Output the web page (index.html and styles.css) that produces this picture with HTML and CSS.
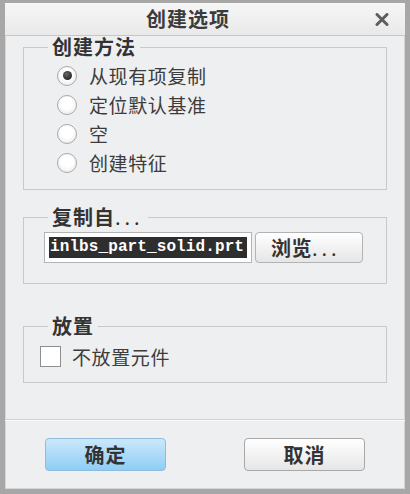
FILE: index.html
```html
<!DOCTYPE html>
<html lang="zh-CN">
<head>
    <meta charset="UTF-8">
    <title>创建选项</title>
    <link rel="stylesheet" href="styles.css">
</head>
<body>
    <div class="dialog">
        <div class="titlebar">
            <span class="title">创建选项</span>
            <svg class="close" width="14" height="13" viewBox="0 0 14 13">
                <path d="M2 1.5 L12 11.5 M12 1.5 L2 11.5" stroke="#5e5e5e" stroke-width="3" stroke-linecap="round"/>
            </svg>
        </div>
        <div class="content">
            <fieldset class="group group-method">
                <legend>创建方法</legend>
                <div class="group-body">
                    <label class="option"><span class="radio checked"></span>从现有项复制</label>
                    <label class="option"><span class="radio"></span>定位默认基准</label>
                    <label class="option"><span class="radio"></span>空</label>
                    <label class="option"><span class="radio"></span>创建特征</label>
                </div>
            </fieldset>

            <fieldset class="group group-copy">
                <legend>复制自<span class="dots">...</span></legend>
                <div class="group-body file-row">
                    <div class="file-input"><span class="selected">inlbs_part_solid.prt</span></div>
                    <button type="button" class="btn browse">浏览<span class="dots">...</span></button>
                </div>
            </fieldset>

            <fieldset class="group group-place">
                <legend>放置</legend>
                <div class="group-body">
                    <label class="option check-option"><span class="checkbox"></span>不放置元件</label>
                </div>
            </fieldset>
        </div>
        <div class="footer">
            <button type="button" class="btn action ok">确定</button>
            <button type="button" class="btn action">取消</button>
        </div>
    </div>
</body>
</html>
```

FILE: styles.css
```css
body {
    margin: 0;
    padding: 0;
    background-color: #eeeff0;
    font-family: "Noto Sans CJK SC", "Noto Sans", sans-serif;
}

.dialog {
    width: 410px;
    height: 494px;
    box-sizing: border-box;
    border: 5px solid #a7a7a7;
    border-top-width: 3px;
    box-shadow: inset 0 0 0 1px #d6d6d6;
    background-color: #eeeff0;
    display: flex;
    flex-direction: column;
}

.titlebar {
    height: 33px;
    box-sizing: border-box;
    border-bottom: 1px solid #c6c6c6;
    background: linear-gradient(#f6f6f6, #e9e9e9);
    display: flex;
    align-items: center;
    padding-left: 141px;
    padding-right: 16px;
}

.title {
    flex: 1;
    font-size: 20px;
    font-weight: bold;
    letter-spacing: 1px;
    color: #3b3b3b;
    line-height: 24px;
}

.close {
    display: block;
}

.content {
    flex: 1;
    padding: 1px 18px 0 18px;
}

.group {
    margin: 0;
    padding: 0;
    min-width: 0;
    border: 1px solid #c9c9c9;
}

.group legend {
    margin-left: 24px;
    padding: 0 4px;
    font-size: 20px;
    font-weight: bold;
    line-height: 20px;
    letter-spacing: 1px;
    color: #333;
}

.dots {
    letter-spacing: 4px;
    font-weight: normal;
}

.group-method .group-body {
    padding: 4px 0 12px 33px;
}

.group-copy {
    margin-top: 17px;
}

.group-copy .group-body {
    padding: 5px 0 20px 20px;
}

.group-place {
    margin-top: 32px;
}

.group-place .group-body {
    padding: 5px 0 11px 16px;
}

.option {
    display: flex;
    align-items: center;
    height: 29px;
    gap: 12px;
    font-size: 19px;
    letter-spacing: 0.6px;
    color: #3c3c3c;
}

.check-option {
    height: 30px;
    gap: 11px;
}

.radio {
    width: 20px;
    height: 20px;
    box-sizing: border-box;
    border-radius: 50%;
    border: 1px solid #a9a9a9;
    background: radial-gradient(circle at 50% 40%, #ffffff 40%, #e4e4e4);
    display: flex;
    align-items: center;
    justify-content: center;
}

.radio.checked::after {
    content: "";
    width: 9px;
    height: 9px;
    border-radius: 50%;
    background: radial-gradient(circle at 40% 35%, #666, #111);
}

.checkbox {
    width: 21px;
    height: 21px;
    box-sizing: border-box;
    border: 1px solid #8e8e8e;
    background-color: #fff;
}

.file-row {
    display: flex;
    gap: 3px;
}

.file-input {
    width: 208px;
    height: 31px;
    box-sizing: border-box;
    border: 1px solid #b4b4b4;
    background-color: #fff;
    padding: 4px;
    overflow: hidden;
}

.selected {
    display: block;
    background-color: #2e2e2e;
    color: #fff;
    font-family: "Liberation Mono", monospace;
    font-weight: bold;
    font-size: 16px;
    letter-spacing: 0.1px;
    line-height: 21px;
    padding-left: 1px;
    white-space: nowrap;
}

.btn {
    font-family: "Noto Sans CJK SC", "Noto Sans", sans-serif;
    font-weight: bold;
    font-size: 20px;
    color: #333;
    background: linear-gradient(#ffffff, #e6e6e6);
    border: 1px solid #b3b3b3;
    border-radius: 4px;
    padding: 0;
    cursor: pointer;
}

.browse {
    width: 108px;
    height: 31px;
    text-align: left;
    padding-left: 15px;
    letter-spacing: 0.5px;
}

.footer {
    height: 70px;
    box-sizing: border-box;
    border-top: 1px solid #d1d1d1;
    box-shadow: inset 0 1px 0 #fafafa;
    display: flex;
    align-items: flex-start;
    padding: 18px 0 0 40px;
    gap: 78px;
}

.action {
    width: 121px;
    height: 33px;
    letter-spacing: 1px;
    border-color: #a8a8a8;
}

.ok {
    background: linear-gradient(#cbe8fb, #8ecdf5);
    border-color: #8fbcdc;
}
```
